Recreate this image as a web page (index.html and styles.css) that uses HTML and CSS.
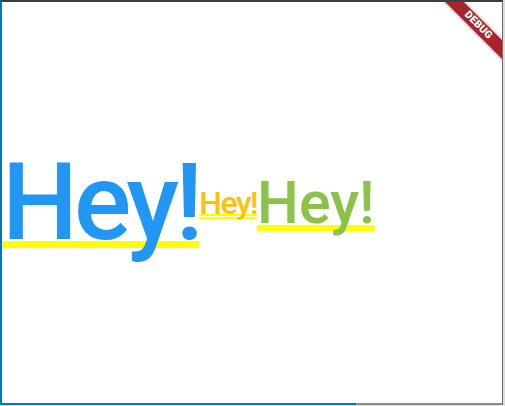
FILE: index.html
```html
<!DOCTYPE html>
<html>
<head>
<meta charset="utf-8">
<link rel="stylesheet" href="styles.css">
</head>
<body>
<div class="window">
  <div class="content">
    <span class="hey hey-blue">Hey!</span>
    <span class="hey hey-amber">Hey!</span>
    <span class="hey hey-green">Hey!</span>
    <div class="banner"><span class="banner-text">DEBUG</span></div>
  </div>
  <div class="bottom-bar"></div>
</div>
</body>
</html>
```

FILE: styles.css
```css
html, body {
  margin: 0;
  padding: 0;
}
body {
  width: 505px;
  height: 406px;
  background: #dcdcdc;
  overflow: hidden;
  font-family: Roboto, "Noto Sans", sans-serif;
}
.window {
  box-sizing: border-box;
  width: 503px;
  height: 405px;
  border-top: 2px solid #3e3e3e;
  border-left: 2px solid #0b75b2;
  border-right: 1px solid #6e6e6e;
  display: flex;
  flex-direction: column;
  background: #ffffff;
}
.content {
  position: relative;
  flex: 1;
  display: flex;
  flex-direction: row;
  align-items: center;
  overflow: hidden;
}
.bottom-bar {
  height: 2px;
  background: linear-gradient(to right, #0b75b2 0, #0b75b2 354px, #8a8a8a 354px);
}
.hey {
  line-height: normal;
  font-weight: 500;
  text-decoration-line: underline;
  text-decoration-color: #ffff00;
  text-decoration-skip-ink: none;
}
.hey-blue {
  font-size: 107px;
  color: #2196f3;
  letter-spacing: -4px;
  text-decoration-thickness: 7px;
  text-underline-offset: 2px;
}
.hey-amber {
  font-size: 32px;
  color: #ffc107;
  letter-spacing: -1.5px;
  text-decoration-style: double;
  text-decoration-thickness: 1.5px;
  text-underline-offset: 0px;
}
.hey-green {
  font-size: 59px;
  color: #8bc34a;
  letter-spacing: 0;
  text-decoration-thickness: 6px;
  text-underline-offset: 2px;
}
.banner {
  position: absolute;
  top: 17px;
  right: -36px;
  width: 120px;
  height: 13px;
  background: #a8232a;
  box-shadow: 0 0 4px rgba(0, 0, 0, 0.45);
  transform: rotate(45deg);
  display: flex;
  align-items: center;
  justify-content: center;
}
.banner-text {
  color: #ffffff;
  font-family: Roboto, "Noto Sans", sans-serif;
  font-weight: 900;
  font-size: 10.5px;
  line-height: 1;
  letter-spacing: 0.2px;
}
```
